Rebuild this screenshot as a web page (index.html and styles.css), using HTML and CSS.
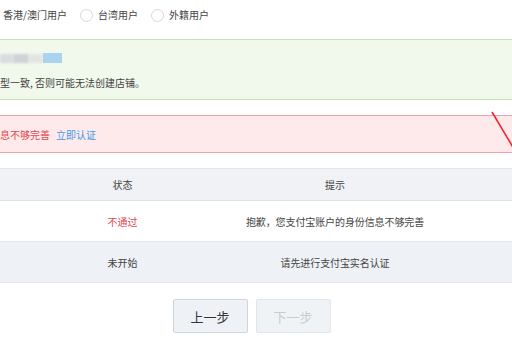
FILE: index.html
```html
<!DOCTYPE html>
<html lang="zh-CN">
<head>
<meta charset="utf-8">
<title>认证</title>
<link rel="stylesheet" href="styles.css">
</head>
<body>
<div class="page">
  <div class="radio-row">
    <label class="opt">香港/澳门用户</label>
    <label class="opt"><span class="radio"></span>台湾用户</label>
    <label class="opt"><span class="radio"></span>外籍用户</label>
  </div>

  <div class="notice ok">
    <div class="line blurred"><span class="blk b1"></span><span class="blk b2"></span><span class="blk b3"></span><span class="blk hl"></span></div>
    <div class="line">型一致, 否则可能无法创建店铺。</div>
  </div>

  <div class="notice err">
    <span class="err-text">息不够完善</span><a class="link" href="#">立即认证</a>
  </div>

  <div class="table">
    <div class="tr th"><div class="c1">状态</div><div class="c2">提示</div></div>
    <div class="tr"><div class="c1 red">不通过</div><div class="c2">抱歉，您支付宝账户的身份信息不够完善</div></div>
    <div class="tr alt"><div class="c1">未开始</div><div class="c2">请先进行支付宝实名认证</div></div>
  </div>

  <div class="actions">
    <button class="btn">上一步</button>
    <button class="btn disabled" disabled>下一步</button>
  </div>

  <svg class="mark" width="24" height="44" viewBox="0 0 24 44"><line x1="2" y1="1" x2="24" y2="38" stroke="#f2242c" stroke-width="1.6"/></svg>
</div>
</body>
</html>
```

FILE: styles.css
```css
html, body {
  margin: 0;
  padding: 0;
  background: #fff;
}
body {
  font-family: "Noto Sans CJK SC", "Noto Sans", sans-serif;
  font-size: 10px;
  color: #444;
  overflow: hidden;
}
.page {
  position: relative;
  width: 512px;
  height: 340px;
}
.radio-row {
  display: flex;
  align-items: center;
  height: 30px;
  padding-left: 3px;
  box-sizing: border-box;
}
.opt {
  display: flex;
  align-items: center;
  line-height: 14px;
  color: #444;
  margin-right: 13px;
}
.radio {
  width: 11px;
  height: 11px;
  border: 1px solid #d5d8dc;
  border-radius: 50%;
  margin-right: 5px;
  background: #fff;
}
.notice {
  box-sizing: border-box;
  width: 512px;
}
.ok {
  margin-top: 9px;
  height: 61px;
  background: #f1f8ec;
  border-top: 1px solid #c6e2aa;
  border-bottom: 1px solid #c6e2aa;
  padding-top: 11px;
}
.ok .line {
  height: 14px;
  line-height: 14px;
  color: #444;
}
.ok .line + .line {
  margin-top: 11px;
}
.blurred {
  display: flex;
  align-items: center;
}
.blk {
  display: inline-block;
  height: 9px;
  filter: blur(1.2px);
}
.b1 {
  width: 13px;
  background: #dadde0;
}
.b2 {
  width: 16px;
  background: #cfd3d6;
}
.b3 {
  width: 14px;
  background: #e2e5e2;
}
.hl {
  width: 19px;
  height: 10px;
  background: #a9d3ef;
  filter: blur(0.6px);
}
.err {
  margin-top: 15px;
  height: 38px;
  background: #ffeaeb;
  border-top: 1px solid #f0a4a9;
  border-bottom: 1px solid #f0a4a9;
  display: flex;
  align-items: center;
}
.err-text {
  color: #e0454f;
}
.link {
  color: #3a9be4;
  text-decoration: none;
  margin-left: 6px;
}
.table {
  margin-top: 15px;
}
.tr {
  display: flex;
  align-items: center;
  height: 40px;
  border-bottom: 1px solid #e3e6ea;
  color: #444;
}
.th {
  height: 31px;
  background: #f0f2f5;
  border-top: 1px solid #e3e6ea;
  border-bottom: 1px solid #dde1e6;
}
.alt {
  background: #eef1f5;
}
.c1 {
  width: 245px;
  text-align: center;
  white-space: nowrap;
}
.c2 {
  width: 180px;
  text-align: center;
  white-space: nowrap;
  letter-spacing: -0.1px;
}
.red {
  color: #e8434c;
}
.actions {
  display: flex;
  justify-content: center;
  gap: 8px;
  margin-top: 16px;
  padding-right: 9px;
}
.btn {
  width: 75px;
  height: 34px;
  border: 1px solid #cfd5dc;
  border-radius: 2px;
  background: #eef2f6;
  font-family: "Noto Sans CJK SC", sans-serif;
  font-size: 13px;
  color: #333;
  padding: 0;
}
.btn.disabled {
  border-color: #e2e6ea;
  background: #f0f3f6;
  color: #c8ccd1;
}
.mark {
  position: absolute;
  left: 490px;
  top: 111px;
}
```
